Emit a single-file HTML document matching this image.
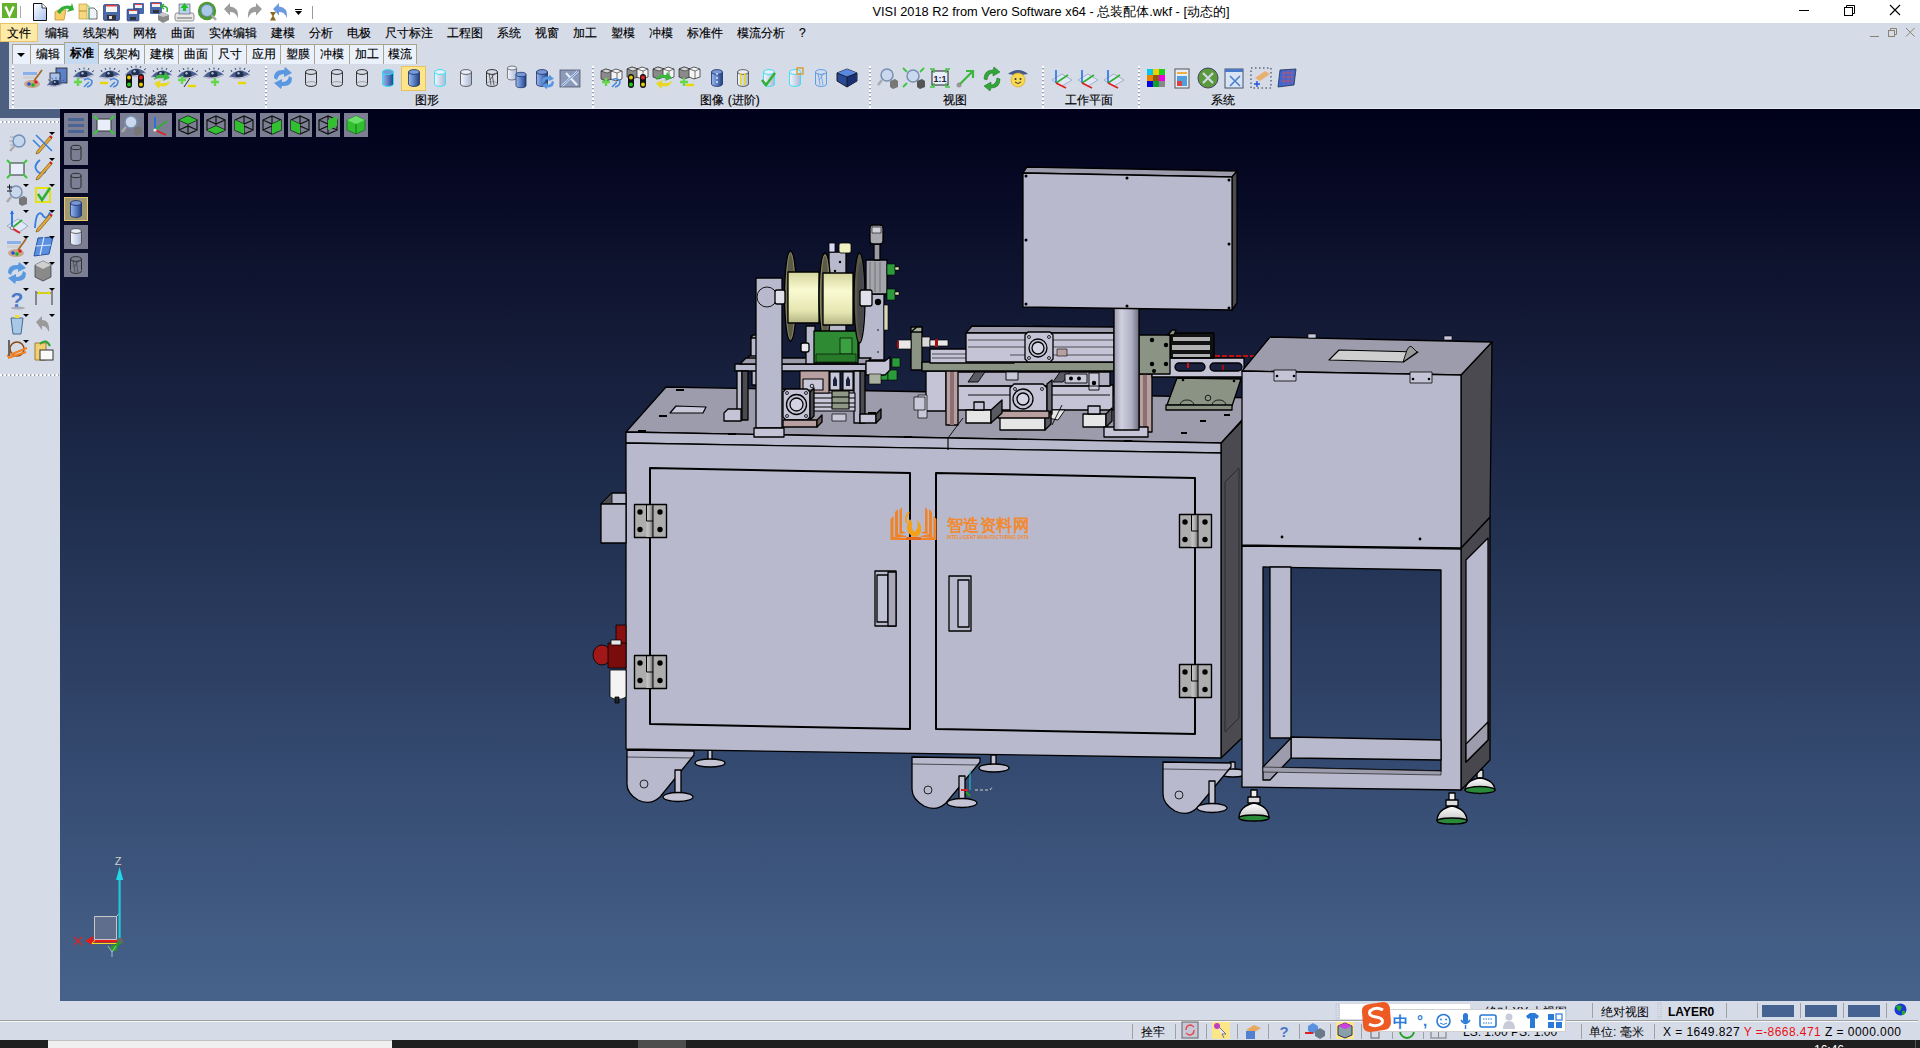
<!DOCTYPE html>
<html><head><meta charset="utf-8">
<style>
*{margin:0;padding:0;box-sizing:border-box}
html,body{width:1920px;height:1048px;overflow:hidden;background:#d6dbe8;font-family:"Liberation Sans",sans-serif;font-size:12px;color:#000}
.a{position:absolute}
.mi{position:absolute;top:25px;height:16px;line-height:16px;font-size:12px;white-space:nowrap;color:#000;-webkit-text-stroke:0.15px #000}
.tab{position:absolute;top:44px;height:20px;border:1px solid #aaa48c;border-bottom:none;background:#eaf1fb;text-align:center;line-height:19px;font-size:12px;color:#000;-webkit-text-stroke:0.15px #000}
.gl{position:absolute;top:92px;height:16px;line-height:16px;font-size:12px;white-space:nowrap;color:#000;transform:translateX(-50%);-webkit-text-stroke:0.15px #000}
.sep{position:absolute;top:66px;width:2px;height:42px;background:repeating-linear-gradient(#ffffff 0 2px,#9aa0ae 2px 3px,#d6dbe8 3px 4px)}
.fb{position:absolute;width:24px;height:24px;background:#7c7f93}
svg{position:absolute;left:0;top:0;overflow:visible}
</style></head><body>
<!-- title bar -->
<div class="a" style="left:0;top:0;width:1920px;height:23px;background:#fff"></div>
<svg width="1920" height="23" style="top:0">
 <rect x="2" y="3" width="15" height="15" fill="#64b22c"/>
 <path d="M5.5 6.5 L9.5 15.5 L13.5 6.5" stroke="#fff" stroke-width="2.4" fill="none"/>
 <rect x="20" y="6" width="1" height="12" fill="#aaa"/>
 <defs><linearGradient id="docg" x1="0" y1="0" x2="1" y2="1"><stop offset="0" stop-color="#fff"/><stop offset="1" stop-color="#a8c0f0"/></linearGradient></defs>
 <path d="M33.5 3.5 H42 L46.5 8 V20.5 H33.5 Z" fill="url(#docg)" stroke="#111" stroke-width="1"/><path d="M42 3.5 V8 H46.5" fill="#fff" stroke="#111" stroke-width="0.8"/>
 <path d="M55 12 L58 10 H66 L64 20 H55 Z" fill="#f6cf6a" stroke="#c09030" stroke-width="0.8"/><path d="M57 12 Q62 4 71 6 L72 3 L74 10 L67 12 L69 9 Q63 8 60 14Z" fill="#2fae38"/>
 <path d="M79 4 H87 V11 H79Z M79 11 H87 V19 H79Z" fill="#f6d880" stroke="#c09a40" stroke-width="0.7"/><path d="M89 8 H94 L97 11 V19 H89Z" fill="#eef3fb" stroke="#333" stroke-width="0.7"/><path d="M87 6 H89 V19 H87" stroke="#4cc04c" stroke-width="0.8" fill="none"/>
 <rect x="103.5" y="4.5" width="16" height="16" rx="1.5" fill="#4a68ac" stroke="#2a3a70" stroke-width="0.7"/><rect x="106" y="5" width="11" height="7" fill="#f4f4f4"/><rect x="106" y="5" width="11" height="1.5" fill="#e04040"/><rect x="107" y="15" width="9" height="5" fill="#333"/><rect x="109" y="16" width="3" height="3" fill="#ddd"/>
 <rect x="133" y="3" width="11" height="11" rx="1" fill="#4a68ac"/><rect x="135" y="4" width="7" height="4" fill="#f0f0f0"/><rect x="135" y="4" width="7" height="1" fill="#e04040"/>
 <rect x="127" y="9" width="12" height="12" rx="1" fill="#4a68ac" stroke="#2a3a70" stroke-width="0.6"/><rect x="129" y="10" width="8" height="4" fill="#f0f0f0"/><rect x="129" y="10" width="8" height="1" fill="#e04040"/><rect x="130" y="17" width="6" height="3" fill="#333"/>
 <rect x="150" y="2" width="12" height="12" rx="1" fill="#4a68ac"/><rect x="152" y="3" width="8" height="4" fill="#f0f0f0"/><rect x="152" y="3" width="8" height="1" fill="#e04040"/><rect x="153" y="10" width="6" height="3" fill="#333"/>
 <path d="M158 15 L163 12 L169 15 V20 L163 23 L158 20Z" fill="#8a8a8a"/><path d="M158 15 L163 17 L169 15 L163 12Z" fill="#c8c8c8"/><path d="M162 6 Q169 6 167 12 M164 4 L161 6.5 L164 9" stroke="#2fae38" stroke-width="1.6" fill="none"/>
 <rect x="175" y="13" width="19" height="8" rx="2" fill="#e8e8e8" stroke="#777" stroke-width="0.8"/><rect x="177" y="17" width="15" height="2" fill="#aaa"/><rect x="179" y="4" width="11" height="10" fill="#b8d0f0" stroke="#555" stroke-width="0.6"/><path d="M184.5 3 L180.5 8 H183 V11 H186 V8 H188.5Z" fill="#20c020"/>
 <circle cx="207" cy="11" r="9.2" fill="#4e9a30"/><circle cx="207" cy="10.5" r="6" fill="#aac8e8" stroke="#6a88b0" stroke-width="1"/><path d="M211.5 15 L216 20" stroke="#aaa" stroke-width="2.5"/>
 <path d="M224 9 L230 3 V6.5 Q239 7 238 18 Q235 11 230 12 V15.5 Z" fill="#9c9c9c"/>
 <path d="M262 9 L256 3 V6.5 Q247 7 248 18 Q251 11 256 12 V15.5 Z" fill="#9c9c9c"/>
 <path d="M273 9 L279 3 V6.5 Q288 7 287 18 Q284 11 279 12 V15.5 Z" fill="#6a9ae0"/><path d="M270 12 H276 L273.5 16 L276 20.5 H270 L272.5 16Z" fill="#8a6a20"/>
 <rect x="295" y="9" width="7" height="1" fill="#000"/><path d="M295 11 H302 L298.5 15Z" fill="#000"/>
 <rect x="312" y="6" width="1" height="13" fill="#999"/>
 <text x="1051" y="16" font-size="12.8" text-anchor="middle" fill="#000" font-family="Liberation Sans">VISI 2018 R2 from Vero Software x64 - 总装配体.wkf - [动态的]</text>
 <rect x="1799" y="10" width="10" height="1" fill="#000"/>
 <rect x="1844.5" y="7.5" width="8" height="8" fill="none" stroke="#000" stroke-width="1"/><path d="M1846.5 7.5 V5.5 H1854.5 V13.5 H1852.5" fill="none" stroke="#000" stroke-width="1"/>
 <path d="M1890 5 L1900 15 M1900 5 L1890 15" stroke="#000" stroke-width="1.1"/>
</svg>
<!-- menu bar -->
<div class="a" style="left:0;top:23px;width:38px;height:19px;background:#fde9a8;border:1px solid #e6c56a"></div>
<div class="mi" style="left:7px">文件</div>
<div class="mi" style="left:45px">编辑</div>
<div class="mi" style="left:83px">线架构</div>
<div class="mi" style="left:133px">网格</div>
<div class="mi" style="left:171px">曲面</div>
<div class="mi" style="left:209px">实体编辑</div>
<div class="mi" style="left:271px">建模</div>
<div class="mi" style="left:309px">分析</div>
<div class="mi" style="left:347px">电极</div>
<div class="mi" style="left:385px">尺寸标注</div>
<div class="mi" style="left:447px">工程图</div>
<div class="mi" style="left:497px">系统</div>
<div class="mi" style="left:535px">视窗</div>
<div class="mi" style="left:573px">加工</div>
<div class="mi" style="left:611px">塑模</div>
<div class="mi" style="left:649px">冲模</div>
<div class="mi" style="left:687px">标准件</div>
<div class="mi" style="left:737px">模流分析</div>
<div class="mi" style="left:799px">?</div>
<svg width="1920" height="50" style="top:0">
 <rect x="1870" y="36" width="9" height="1" fill="#8a8370"/>
 <rect x="1888.5" y="30.5" width="6" height="6" fill="none" stroke="#8a8370"/><path d="M1890.5 30.5 V28.5 H1896.5 V34.5 H1894.5" fill="none" stroke="#8a8370"/>
 <path d="M1906 28 L1914.5 36.5 M1914.5 28 L1906 36.5" stroke="#8a8370" stroke-width="1"/>
</svg>
<!-- left dark strip -->
<div class="a" style="left:0;top:42px;width:9px;height:76px;background:#4d5f80"></div>
<div class="a" style="left:9px;top:108px;width:51px;height:10px;background:#4d5f80"></div>
<!-- tabs -->
<div class="tab" style="left:12px;width:19px"><svg width="19" height="20" style="left:0;top:0"><path d="M4 8 H12 L8 12Z" fill="#000"/></svg></div>
<div class="tab" style="left:30px;width:35px">编辑</div>
<div class="tab" style="left:64px;width:35px;top:42px;height:22px;background:#c5d9f1;font-weight:bold;line-height:20px;-webkit-text-stroke:0">标准</div>
<div class="tab" style="left:98px;width:47px">线架构</div>
<div class="tab" style="left:144px;width:35px">建模</div>
<div class="tab" style="left:178px;width:35px">曲面</div>
<div class="tab" style="left:212px;width:35px">尺寸</div>
<div class="tab" style="left:246px;width:35px">应用</div>
<div class="tab" style="left:280px;width:35px">塑膜</div>
<div class="tab" style="left:314px;width:36px">冲模</div>
<div class="tab" style="left:349px;width:35px">加工</div>
<div class="tab" style="left:383px;width:34px">模流</div>
<!-- ribbon labels -->
<div class="sep" style="left:12px"></div>
<div class="sep" style="left:265px"></div>
<div class="sep" style="left:592px"></div>
<div class="sep" style="left:869px"></div>
<div class="sep" style="left:1042px"></div>
<div class="sep" style="left:1138px"></div>
<div class="gl" style="left:136px">属性/过滤器</div>
<div class="gl" style="left:427px">图形</div>
<div class="gl" style="left:730px">图像 (进阶)</div>
<div class="gl" style="left:955px">视图</div>
<div class="gl" style="left:1089px">工作平面</div>
<div class="gl" style="left:1223px">系统</div>
<div class="a" style="left:60px;top:109px;width:1860px;height:892px;background:linear-gradient(#00001a 0px,#131a36 216px,#223253 436px,#354a70 656px,#46628a 881px)"></div>
<div class="a" style="left:0;top:118px;width:60px;height:883px;background:#d6dbe8"></div>
<div class="a" style="left:9px;top:108px;width:1911px;height:1px;background:#e6eaf4"></div>
<svg width="1920" height="1048" style="top:0;left:0">
<defs>
 <linearGradient id="gb" x1="0" x2="1"><stop offset="0" stop-color="#9ab8ec"/><stop offset="0.5" stop-color="#5b7fc4"/><stop offset="1" stop-color="#22407e"/></linearGradient>
 <linearGradient id="gl" x1="0" x2="1"><stop offset="0" stop-color="#f4f7ff"/><stop offset="1" stop-color="#aab8d6"/></linearGradient>
 <symbol id="eye" viewBox="0 0 24 24"><path d="M1 11 Q11 -1 22 9 Q12 15 1 11Z" fill="#4a5f90"/><path d="M4 6 L3 4 M8 4 L7 2 M12 3.5 V1.5 M16 4 L17 2 M20 6 L22 4.5" stroke="#3a4a70" stroke-width="1"/><ellipse cx="11.5" cy="8.5" rx="4" ry="3.6" fill="#22304e"/><circle cx="10.5" cy="7.3" r="1.2" fill="#a8bce0"/><path d="M2 11 Q11 14 21 9" stroke="#d0cce0" stroke-width="1.2" fill="none"/></symbol>
 <symbol id="plus" viewBox="0 0 24 24"><path d="M2 16 H10 M6 12 V20" stroke="#62d84a" stroke-width="2.4"/></symbol>
 <symbol id="minus" viewBox="0 0 24 24"><path d="M2 17 H10" stroke="#e6d800" stroke-width="2.4"/></symbol>
 <symbol id="blueundo" viewBox="0 0 24 24"><path d="M12 14 Q17 11 20 15 Q20 20 15 21 M12 21 L17 16" stroke="#4a8ad8" stroke-width="1.6" fill="none"/></symbol>
 <symbol id="traffic" viewBox="0 0 24 24"><rect x="2" y="8" width="6" height="14" rx="3" fill="#111"/><rect x="14" y="8" width="6" height="14" rx="3" fill="#111"/><circle cx="5" cy="11.5" r="2" fill="#e8c800"/><circle cx="5" cy="18.5" r="2" fill="#1ec81e"/><circle cx="17" cy="11.5" r="2" fill="#e82020"/><circle cx="17" cy="18.5" r="2" fill="#e8c800"/></symbol>
 <symbol id="recyc" viewBox="0 0 24 24"><path d="M4 14 Q6 7 14 9 L15 6 L20 12 L13 15 L14 12 Q8 11 4 14Z" fill="#3cb83c"/><path d="M20 15 Q18 22 10 20 L9 23 L4 17 L11 14 L10 17 Q16 18 20 15Z" fill="#e8d820"/></symbol>
 <symbol id="cylo" viewBox="0 0 24 24"><ellipse cx="12" cy="6" rx="5.5" ry="2.4" fill="none" stroke="#333" stroke-width="1"/><path d="M6.5 6 V18 A5.5 2.4 0 0 0 17.5 18 V6" fill="none" stroke="#333" stroke-width="1"/><path d="M6.5 18 A5.5 2.4 0 0 1 17.5 18" fill="none" stroke="#888" stroke-width="0.7"/></symbol>
 <symbol id="cylb" viewBox="0 0 24 24"><path d="M6.5 6 V18 A5.5 2.4 0 0 0 17.5 18 V6Z" fill="url(#gb)" stroke="#1a2f66" stroke-width="0.8"/><ellipse cx="12" cy="6" rx="5.5" ry="2.4" fill="#7898d6" stroke="#1a2f66" stroke-width="0.8"/></symbol>
 <symbol id="cylc" viewBox="0 0 24 24"><path d="M6.5 6 V18 A5.5 2.4 0 0 0 17.5 18 V6Z" fill="url(#gb)" stroke="#30e0f0" stroke-width="1"/><ellipse cx="12" cy="6" rx="5.5" ry="2.4" fill="#7898d6" stroke="#30e0f0" stroke-width="1"/></symbol>
 <symbol id="cyll" viewBox="0 0 24 24"><path d="M6.5 6 V18 A5.5 2.4 0 0 0 17.5 18 V6Z" fill="url(#gl)" stroke="#444" stroke-width="0.8"/><ellipse cx="12" cy="6" rx="5.5" ry="2.4" fill="#e8eefa" stroke="#444" stroke-width="0.8"/></symbol>
 <symbol id="cyllc" viewBox="0 0 24 24"><path d="M6.5 6 V18 A5.5 2.4 0 0 0 17.5 18 V6Z" fill="url(#gl)" stroke="#40e0f0" stroke-width="1"/><ellipse cx="12" cy="6" rx="5.5" ry="2.4" fill="#e8eefa" stroke="#40e0f0" stroke-width="1"/></symbol>
 <symbol id="cylw" viewBox="0 0 24 24"><use href="#cylo"/><path d="M9 7 L11 19 M12 8 L14 19 M15 7 L10 14" stroke="#444" stroke-width="0.8"/></symbol>
 <symbol id="cubes" viewBox="0 0 24 24"><path d="M1 5 L6 3 L12 5 V13 L6 15 L1 13Z" fill="#8a8a8a" stroke="#222" stroke-width="0.7"/><path d="M1 5 L6 3 L12 5 L7 7Z" fill="#d8d8d8" stroke="#222" stroke-width="0.6"/><path d="M11 5 L16 3 L22 5 V13 L16 15 L11 13Z" fill="#f4f4f4" stroke="#222" stroke-width="0.7"/><path d="M11 5 L17 7 L22 5 M17 7 V15" fill="none" stroke="#222" stroke-width="0.6"/></symbol>
 <symbol id="cubeb" viewBox="0 0 24 24"><path d="M2 7 L12 3 L22 7 V15 L12 21 L2 15Z" fill="#2a4a9a" stroke="#111" stroke-width="0.9"/><path d="M2 7 L12 3 L22 7 L12 11Z" fill="#5a88e0"/><path d="M12 11 L22 7 V15 L12 21Z" fill="#1a3070"/><path d="M2 7 L12 11 L22 7 M12 11 V21" stroke="#111" stroke-width="0.8" fill="none"/></symbol>
 <symbol id="zoomcube" viewBox="0 0 24 24"><circle cx="11" cy="9" r="6" fill="#c9d8ec" stroke="#7890b0" stroke-width="1.5"/><path d="M6 14 L2 19" stroke="#aaa" stroke-width="2.5"/><path d="M14 15 L19 13 L22 15 V21 L17 23 L14 21Z" fill="#777"/></symbol>
 <symbol id="fitbox" viewBox="0 0 24 24"><rect x="5" y="6" width="14" height="12" fill="#e8eefa" stroke="#333"/><path d="M2 3 L6 7 M22 3 L18 7 M2 21 L6 17 M22 21 L18 17" stroke="#3cc83c" stroke-width="2"/></symbol>
 <symbol id="arrowg" viewBox="0 0 24 24"><circle cx="5" cy="19" r="2.5" fill="#999"/><path d="M6 18 L18 6 M12 5 H19 V12" stroke="#3cb83c" stroke-width="2.2" fill="none"/></symbol>
 <symbol id="smiley" viewBox="0 0 24 24"><path d="M2 8 Q12 0 22 8 Q12 10 2 8Z" fill="#44598a"/><circle cx="12" cy="14" r="7" fill="#f8d850" stroke="#d8a820" stroke-width="0.7"/><circle cx="9.5" cy="13" r="1" fill="#333"/><circle cx="14.5" cy="13" r="1" fill="#333"/><path d="M9 16 Q12 19 15 16" stroke="#333" fill="none"/></symbol>
 <symbol id="wplane" viewBox="0 0 24 24"><path d="M2 14 L12 8 L22 14 L12 20Z" fill="#e0e8f8" stroke="#8a9ab8" stroke-width="0.7"/><path d="M6 17 V4" stroke="#2070e8" stroke-width="1.6"/><path d="M6 17 L18 9" stroke="#30b030" stroke-width="1.6"/><path d="M6 17 L16 22" stroke="#e02020" stroke-width="1.6"/></symbol>
 <symbol id="palette" viewBox="0 0 24 24"><rect x="2" y="6" width="14" height="3" fill="#8ab0ec"/><rect x="2" y="10" width="13" height="3" fill="#d0d0d0"/><ellipse cx="11" cy="18" rx="8" ry="4" fill="#c9a488"/><circle cx="8" cy="18" r="1.8" fill="#2050d8"/><circle cx="12" cy="19" r="1.8" fill="#20b020"/><circle cx="15" cy="16" r="1.8" fill="#d82020"/><path d="M13 15 L21 4" stroke="#a86828" stroke-width="1.8"/></symbol>
 <symbol id="docseye" viewBox="0 0 24 24"><rect x="10" y="2" width="11" height="15" fill="#5a80c8" stroke="#222" stroke-width="0.8"/><rect x="4" y="7" width="10" height="10" fill="#a8c0ec" stroke="#222" stroke-width="0.8"/><use href="#eye" x="0" y="10" width="20" height="20"/></symbol>
 <symbol id="grid9" viewBox="0 0 24 24"><rect x="3" y="3" width="6" height="6" fill="#00c8f0"/><rect x="9" y="3" width="6" height="6" fill="#f0d000"/><rect x="15" y="3" width="6" height="6" fill="#20d020"/><rect x="3" y="9" width="6" height="6" fill="#f08000"/><rect x="9" y="9" width="6" height="6" fill="#8a5a10"/><rect x="15" y="9" width="6" height="6" fill="#f000e0"/><rect x="3" y="15" width="6" height="6" fill="#0000e0"/><rect x="9" y="15" width="6" height="6" fill="#10a030"/><rect x="15" y="15" width="6" height="6" fill="#888"/></symbol>
 <symbol id="calc" viewBox="0 0 24 24"><rect x="5" y="3" width="14" height="19" fill="#e8eef8" stroke="#555"/><rect x="7" y="6" width="10" height="2" fill="#f0b040"/><rect x="7" y="10" width="10" height="10" fill="#50a0e0"/><rect x="7" y="15" width="5" height="5" fill="#e04040"/></symbol>
 <symbol id="tools" viewBox="0 0 24 24"><circle cx="12" cy="12" r="10" fill="#5a9a3a" stroke="#446"/><path d="M7 7 L17 17 M17 7 L7 17" stroke="#d0d8e8" stroke-width="2.2"/></symbol>
 <symbol id="win" viewBox="0 0 24 24"><rect x="3" y="3" width="18" height="19" fill="#d8e4f4" stroke="#456"/><rect x="3" y="3" width="18" height="3" fill="#4a78c8"/><path d="M8 10 L18 20 M18 10 L8 20" stroke="#4a80d0" stroke-width="1.6"/></symbol>
 <symbol id="hand" viewBox="0 0 24 24"><path d="M2 2 H22 V22 H2Z" fill="none" stroke="#234" stroke-dasharray="1.5 2.5"/><path d="M6 12 L16 5 L21 8 L11 15Z" fill="#e8b070"/><path d="M5 18 H11 M8 15 V21" stroke="#2050d8" stroke-width="1.4"/></symbol>
 <symbol id="panel" viewBox="0 0 24 24"><path d="M5 4 L21 3 L19 19 L3 21Z" fill="#3a68d8" stroke="#234" stroke-width="0.8"/><path d="M7 7 H18 M6.5 11 H18 M6 15 H17 M9 5 V19 M13 4 V19 M17 4 V18" stroke="#e05050" stroke-width="0.7"/></symbol>
 <symbol id="zoomgreen" viewBox="0 0 24 24"><circle cx="11" cy="10" r="6" fill="#c9d8ec" stroke="#7890b0" stroke-width="1.5"/><path d="M1 2 L5 6 M22 2 L18 6 M1 21 L5 17" stroke="#3cc83c" stroke-width="1.8"/><path d="M15 15 L20 13 L23 15 V21 L18 23 L15 21Z" fill="#555"/></symbol>
 <symbol id="one1" viewBox="0 0 24 24"><rect x="4" y="5" width="16" height="14" fill="#e8eefa" stroke="#222"/><text x="12" y="16" font-size="9" text-anchor="middle" font-family="Liberation Sans" fill="#223" font-weight="bold">1:1</text><path d="M2 3 h4 v4 M22 3 h-4 v4 M2 21 h4 v-4 M22 21 h-4 v-4" stroke="#3cc83c" stroke-width="1.5" fill="none"/></symbol>
 <symbol id="refblue" viewBox="0 0 24 24"><path d="M3 12 Q3 3 13 4 L14 1 L21 7 L13 11 L13 8 Q7 8 6 14Z" fill="#5a98e0"/><path d="M21 12 Q21 21 11 20 L10 23 L3 17 L11 13 L11 16 Q17 16 18 10Z" fill="#5a98e0"/></symbol>
</defs>
<!-- highlight -->
<rect x="401.5" y="66.5" width="24" height="24" fill="#fde58a" stroke="#e8c262"/>
<!-- group1 -->
<use href="#palette" x="21" y="66" width="24" height="24"/>
<use href="#docseye" x="46" y="66" width="24" height="24"/>
<use href="#eye" x="72" y="66" width="24" height="24"/><use href="#plus" x="72" y="66" width="24" height="24"/><use href="#blueundo" x="72" y="66" width="24" height="24"/>
<use href="#eye" x="98" y="66" width="24" height="24"/><use href="#minus" x="98" y="66" width="24" height="24"/><use href="#blueundo" x="98" y="66" width="24" height="24"/>
<use href="#eye" x="124" y="64" width="24" height="24"/><use href="#traffic" x="124" y="66" width="24" height="24"/>
<use href="#eye" x="150" y="66" width="24" height="24"/><use href="#recyc" x="150" y="66" width="24" height="24"/>
<use href="#eye" x="176" y="66" width="24" height="24"/><use href="#plus" x="176" y="64" width="24" height="24"/><path d="M184 87 L190 78" stroke="#222" stroke-width="1"/><use href="#minus" x="186" y="69" width="24" height="24"/>
<use href="#eye" x="202" y="66" width="24" height="24"/><use href="#plus" x="209" y="66" width="24" height="24"/>
<use href="#eye" x="228" y="66" width="24" height="24"/><use href="#minus" x="236" y="66" width="24" height="24"/>
<!-- group2 -->
<use href="#refblue" x="271" y="66" width="24" height="24"/>
<use href="#cylo" x="299" y="66" width="24" height="24"/>
<use href="#cylo" x="325" y="66" width="24" height="24"/>
<use href="#cylo" x="350" y="66" width="24" height="24"/>
<use href="#cylc" x="376" y="66" width="24" height="24"/>
<use href="#cylb" x="402" y="66" width="24" height="24"/>
<use href="#cyllc" x="428" y="66" width="24" height="24"/>
<use href="#cyll" x="454" y="66" width="24" height="24"/>
<use href="#cylw" x="480" y="66" width="24" height="24"/>
<use href="#cyll" x="502" y="63" width="20" height="20"/><use href="#cylb" x="510" y="69" width="22" height="22"/>
<use href="#cylb" x="530" y="66" width="24" height="24"/><use href="#refblue" x="540" y="74" width="16" height="16"/>
<rect x="560" y="70" width="20" height="17" fill="#8a9ab8" stroke="#556" stroke-width="0.8"/><path d="M562 86 L578 71 M566 73 L577 85" stroke="#e8eef8" stroke-width="2.2"/><path d="M562 86 L578 71" stroke="#4a80d0" stroke-width="1"/>
<!-- group3 -->
<use href="#cubes" x="600" y="66" width="24" height="24"/><use href="#plus" x="600" y="66" width="24" height="24"/><use href="#blueundo" x="600" y="66" width="24" height="24"/>
<use href="#cubes" x="626" y="64" width="24" height="24"/><use href="#traffic" x="626" y="66" width="24" height="24"/>
<use href="#cubes" x="652" y="64" width="24" height="24"/><use href="#recyc" x="652" y="66" width="24" height="24"/>
<use href="#cubes" x="678" y="64" width="24" height="24"/><use href="#plus" x="678" y="66" width="24" height="24"/><use href="#minus" x="684" y="68" width="24" height="24"/>
<use href="#cylb" x="705" y="66" width="24" height="24"/><path d="M717 73 V85" stroke="#fff" stroke-width="1.2" stroke-dasharray="2 2"/>
<use href="#cyll" x="731" y="66" width="24" height="24"/><rect x="740" y="73" width="1.6" height="12" fill="#e8d820"/><rect x="744" y="73" width="1.6" height="12" fill="#e8d820"/>
<use href="#cyllc" x="757" y="66" width="24" height="24"/><path d="M762 80 L766 85 L775 73" stroke="#30b030" stroke-width="2.5" fill="none"/>
<use href="#cyllc" x="783" y="66" width="24" height="24"/><rect x="797" y="68" width="6" height="6" fill="none" stroke="#d8a040" stroke-width="1.5"/>
<ellipse cx="821" cy="72" rx="5.5" ry="2.4" fill="none" stroke="#5aa0e8" stroke-width="1"/><path d="M815.5 72 V84 A5.5 2.4 0 0 0 826.5 84 V72" fill="none" stroke="#5aa0e8" stroke-width="1"/><path d="M818 73 L820 85 M821 74 L823 85 M824 73 L819 80" stroke="#5aa0e8" stroke-width="0.8"/>
<use href="#cubeb" x="835" y="66" width="24" height="24"/>
<!-- group4 -->
<use href="#zoomcube" x="876" y="66" width="24" height="24"/>
<use href="#zoomgreen" x="902" y="66" width="24" height="24"/>
<use href="#one1" x="928" y="66" width="24" height="24"/>
<use href="#arrowg" x="954" y="66" width="24" height="24"/>
<path d="M984 79 Q984 70 993 70 L994 67 L1000 72 L993 76 L993 73 Q988 73 987 80Z M1000 79 Q1000 88 991 88 L990 91 L984 86 L991 82 L991 85 Q996 85 997 78Z" fill="#30a838" stroke="#1a6a20" stroke-width="0.5"/>
<use href="#smiley" x="1006" y="66" width="24" height="24"/>
<!-- group5 -->
<use href="#wplane" x="1050" y="66" width="24" height="24"/>
<use href="#wplane" x="1076" y="66" width="24" height="24"/>
<use href="#wplane" x="1102" y="66" width="24" height="24"/>
<!-- group6 -->
<use href="#grid9" x="1144" y="66" width="24" height="24"/>
<use href="#calc" x="1170" y="66" width="24" height="24"/>
<use href="#tools" x="1196" y="66" width="24" height="24"/>
<use href="#win" x="1222" y="66" width="24" height="24"/>
<use href="#hand" x="1249" y="66" width="24" height="24"/>
<use href="#panel" x="1275" y="66" width="24" height="24"/>
</svg>
<div class="a" style="left:0;top:121px;width:59px;height:2px;background:repeating-linear-gradient(90deg,#fff 0 2px,#9aa0ae 2px 3px,#d6dbe8 3px 4px)"></div>
<div class="a" style="left:0;top:374px;width:59px;height:2px;background:repeating-linear-gradient(90deg,#fff 0 2px,#9aa0ae 2px 3px,#d6dbe8 3px 4px)"></div>
<svg width="1920" height="1048" style="top:0;left:0">
<defs>
 <symbol id="pencil" viewBox="0 0 24 24"><path d="M6 20 L19 5 L21 7 L8 22 L5 23Z" fill="#e0a838" stroke="#6a4a10" stroke-width="0.6"/><path d="M19 5 L21 7" stroke="#d02020" stroke-width="2"/></symbol>
 <symbol id="dd" viewBox="0 0 24 24"><path d="M18 1 H24 L21 4Z" fill="#000"/></symbol>
 <symbol id="fbcyl" viewBox="0 0 24 24"><ellipse cx="12" cy="6.5" rx="5" ry="2.2" fill="none" stroke="#222" stroke-width="0.9"/><path d="M7 6.5 V17.5 A5 2.2 0 0 0 17 17.5 V6.5" fill="none" stroke="#222" stroke-width="0.9"/></symbol>
 <symbol id="wcube" viewBox="0 0 24 24"><path d="M3 7 L12 3 L21 7 V17 L12 21 L3 17Z M3 7 L12 11 L21 7 M12 11 V21 M3 17 L12 13 L21 17 M12 3 V13" fill="none" stroke="#111" stroke-width="1.2"/></symbol>
</defs>
<!-- left toolbar icons -->
<path d="M10 137 H16 M9 141 H14 M10 145 H15" stroke="#b8b8c0" stroke-width="1.5"/><circle cx="19" cy="141" r="6" fill="#c4d6ec" stroke="#7090b8" stroke-width="1.5"/><path d="M14.5 146 L10 151" stroke="#aaa" stroke-width="2.5"/>
<use href="#pencil" x="31" y="131" width="24" height="24"/><path d="M36 135 L52 151 M33 140 L40 147" stroke="#3a80e0" stroke-width="1.6"/><use href="#dd" x="31" y="131" width="24" height="24"/>
<use href="#fitbox" x="5" y="157" width="24" height="24"/>
<path d="M40 160 Q32 166 38 172 Q44 176 46 170" stroke="#3a80e0" stroke-width="1.8" fill="none"/><use href="#pencil" x="31" y="157" width="24" height="24"/><use href="#dd" x="31" y="157" width="24" height="24"/>
<use href="#zoomcube" x="5" y="183" width="24" height="24"/><path d="M7 187 H12 M9.5 184.5 V189.5 M7 191 H12" stroke="#111" stroke-width="1"/><use href="#dd" x="5" y="183" width="24" height="24"/>
<rect x="36" y="188" width="14" height="14" fill="none" stroke="#e8e000" stroke-width="1.8"/><path d="M38 194 L42 200 L50 188" stroke="#30b030" stroke-width="2.6" fill="none"/><use href="#dd" x="31" y="183" width="24" height="24"/>
<path d="M7 226 L18 219 L28 226 L18 233Z" fill="#e0e8f8" stroke="#8a9ab8" stroke-width="0.8"/><path d="M12 228 V213" stroke="#2070e8" stroke-width="1.8"/><path d="M10 214 L12 210 L14 214Z" fill="#2070e8"/><path d="M12 228 L22 220" stroke="#30b030" stroke-width="1.8"/><path d="M12 228 L20 233" stroke="#e02020" stroke-width="1.8"/><circle cx="12" cy="228" r="1.8" fill="#ddd" stroke="#666" stroke-width="0.6"/><use href="#dd" x="5" y="209" width="24" height="24"/>
<path d="M35 228 Q36 210 42 214 Q46 222 50 212" stroke="#3a80e0" stroke-width="1.8" fill="none"/><use href="#pencil" x="31" y="209" width="24" height="24"/><use href="#dd" x="31" y="209" width="24" height="24"/>
<use href="#palette" x="5" y="235" width="24" height="24"/><use href="#dd" x="5" y="235" width="24" height="24"/>
<path d="M38 238 L53 237 L49 254 L34 256Z" fill="#5a90e0" stroke="#2a50a0"/><path d="M44 237 L40 255 M36 246 L51 245" stroke="#dbe6fa" stroke-width="1.2"/><use href="#dd" x="31" y="235" width="24" height="24"/>
<use href="#refblue" x="5" y="261" width="24" height="24"/><use href="#dd" x="5" y="261" width="24" height="24"/>
<path d="M35 265 L43 261 L51 265 V277 L43 281 L35 277Z" fill="#8a8a8a" stroke="#333" stroke-width="0.7"/><path d="M35 265 L43 269 L51 265 L43 261Z" fill="#cfcfcf"/><use href="#dd" x="31" y="261" width="24" height="24"/>
<text x="17" y="307" font-size="21" font-weight="bold" fill="#4a78c8" text-anchor="middle" font-family="Liberation Sans">?</text><ellipse cx="18" cy="308" rx="7" ry="1.5" fill="#8a8a9a" opacity="0.6"/><use href="#dd" x="5" y="287" width="24" height="24"/>
<path d="M36 291 V305 M52 291 V305 M37 293 H51" stroke="#333" stroke-width="1"/><path d="M38 293 H50" stroke="#e8e000" stroke-width="1.6"/><path d="M37 293 L40 291 V295Z M51 293 L48 291 V295Z" fill="#e8e000"/><use href="#dd" x="31" y="287" width="24" height="24"/>
<path d="M11 318 H23 L21 334 H13Z" fill="#a8c8e8" stroke="#4a6a8a"/><rect x="15" y="315" width="4" height="3" fill="#f0e020"/><use href="#dd" x="5" y="313" width="24" height="24"/>
<path d="M36 322 L42 316 V320 Q50 320 49 332 Q46 325 42 326 V330Z" fill="#9a9a9a"/><use href="#dd" x="31" y="313" width="24" height="24"/>
<circle cx="17" cy="349" r="7" fill="none" stroke="#8a4a10" stroke-width="1.6"/><path d="M7 356 L27 348 M8 358 L26 352" stroke="#f08020" stroke-width="2"/><rect x="8" y="340" width="2" height="16" fill="#666"/><use href="#dd" x="5" y="339" width="24" height="24"/>
<path d="M35 343 H46 V360 H35Z" fill="#f0d070" stroke="#a08030"/><rect x="40" y="350" width="13" height="10" fill="#fafafa" stroke="#333"/><path d="M40 344 Q46 338 50 346" stroke="#30a030" stroke-width="2" fill="none"/>
<!-- floating viewport buttons -->
<g fill="#7c7f93">
<rect x="64" y="113" width="24" height="24"/><rect x="92" y="113" width="24" height="24"/><rect x="120" y="113" width="24" height="24"/><rect x="148" y="113" width="24" height="24"/><rect x="176" y="113" width="24" height="24"/><rect x="204" y="113" width="24" height="24"/><rect x="232" y="113" width="24" height="24"/><rect x="260" y="113" width="24" height="24"/><rect x="288" y="113" width="24" height="24"/><rect x="316" y="113" width="24" height="24"/><rect x="344" y="113" width="24" height="24"/>
<rect x="64" y="141" width="24" height="24"/><rect x="64" y="169" width="24" height="24"/><rect x="64" y="253" width="24" height="24"/><rect x="64" y="225" width="24" height="24"/>
</g>
<rect x="64.5" y="197.5" width="23" height="23" fill="#a09a78" stroke="#e8c868"/>
<rect x="68" y="118" width="16" height="3" fill="#4a6494"/><rect x="68" y="124" width="16" height="3" fill="#4a6494"/><rect x="68" y="130" width="16" height="3" fill="#4a6494"/>
<use href="#fitbox" x="92" y="113" width="24" height="24"/>
<use href="#zoomcube" x="120" y="113" width="24" height="24"/>
<path d="M155 130 V117" stroke="#2070e8" stroke-width="1.8"/><path d="M155 130 L167 121" stroke="#30b030" stroke-width="1.6"/><path d="M155 130 L166 135" stroke="#e02020" stroke-width="1.8"/><circle cx="155" cy="130" r="1.6" fill="#eee"/>
<use href="#wcube" x="176" y="113" width="24" height="24"/><path d="M179 120 L188 116 L197 120 L188 124Z" fill="#30c030"/>
<use href="#wcube" x="204" y="113" width="24" height="24"/><path d="M207 130 L216 126 L225 130 L216 134Z" fill="#30c030"/>
<use href="#wcube" x="232" y="113" width="24" height="24"/><path d="M235 120 L244 124 V134 L235 130Z" fill="#30c030"/>
<use href="#wcube" x="260" y="113" width="24" height="24"/><path d="M272 124 L281 120 V130 L272 134Z" fill="#30c030"/>
<use href="#wcube" x="288" y="113" width="24" height="24"/><path d="M291 120 L300 124 V134 L291 130Z" fill="#30c030"/>
<use href="#wcube" x="316" y="113" width="24" height="24"/><path d="M328 120 L337 116 V126 L328 130Z" fill="#30c030"/>
<path d="M347 120 L356 116 L365 120 V130 L356 134 L347 130Z" fill="#30c030" stroke="#187018" stroke-width="0.8"/><path d="M347 120 L356 124 L365 120 L356 116Z" fill="#6ae06a"/><path d="M356 124 V134" stroke="#187018"/>
<use href="#fbcyl" x="64" y="141" width="24" height="24"/>
<use href="#fbcyl" x="64" y="169" width="24" height="24"/>
<use href="#cylb" x="64" y="197" width="24" height="24"/>
<use href="#cyll" x="64" y="225" width="24" height="24"/>
<use href="#cylw" x="64" y="253" width="24" height="24"/>
</svg>
<svg width="1920" height="1048" style="top:0;left:0" stroke-linejoin="round">
<defs>
 <linearGradient id="pole" x1="0" x2="1"><stop offset="0" stop-color="#9a9aac"/><stop offset="0.3" stop-color="#d0d0e0"/><stop offset="0.7" stop-color="#b0b0c4"/><stop offset="1" stop-color="#6e6e80"/></linearGradient>
 <linearGradient id="spool" x1="0" x2="0" y1="0" y2="1"><stop offset="0" stop-color="#d4d49c"/><stop offset="0.35" stop-color="#fafad2"/><stop offset="0.75" stop-color="#e6e6b2"/><stop offset="1" stop-color="#b4b484"/></linearGradient>
 <linearGradient id="pad" x1="0" x2="0" y1="0" y2="1"><stop offset="0" stop-color="#ffffff"/><stop offset="1" stop-color="#c8c8c8"/></linearGradient>
</defs>
<g stroke="#000" stroke-width="1.3">
<!-- ===== main cabinet ===== -->
<!-- feet behind -->
<g fill="#c4c4d4">
 <rect x="708" y="748" width="4" height="14"/><ellipse cx="710" cy="763" rx="15" ry="4"/>
 <rect x="991" y="755" width="5" height="12"/><ellipse cx="994" cy="768" rx="15" ry="4"/>
 <rect x="1230" y="762" width="5" height="11"/><ellipse cx="1233" cy="773" rx="14" ry="4"/>
</g>
<!-- right dark side -->
<polygon points="1221,443 1242,421 1242,738 1221,758" fill="#4a4a50"/>
<!-- top plate -->
<polygon points="1225,482 1239,468 1239,718 1225,732" fill="none" stroke="#2a2a30" stroke-width="1"/>
<polygon points="626,432 666,387 1262,398 1221,443" fill="#9c9cac"/>
<polygon points="626,432 1221,443 1221,453 626,443" fill="#b9b9cd"/>
<!-- front -->
<polygon points="626,443 1221,453 1221,758 626,749" fill="#b9b9cd"/>

<!-- doors -->
<polygon points="650,468 910,473 910,729 650,724" fill="#b9b9cd" stroke-width="2"/>
<polygon points="936,473 1195,478 1195,734 936,729" fill="#b9b9cd" stroke-width="2"/>
<!-- handles -->
<rect x="875" y="571" width="21" height="55" fill="#b8b8cc"/><rect x="877" y="575" width="11" height="47" fill="#c0c0d4"/><rect x="888" y="572" width="8" height="54" fill="#a8a8b8"/>
<rect x="949" y="576" width="22" height="55" fill="#b8b8cc"/><rect x="958" y="580" width="11" height="47" fill="#c0c0d4"/>
<!-- hinges -->
<defs><linearGradient id="knk" x1="0" x2="1"><stop offset="0" stop-color="#c8c8c8"/><stop offset="0.5" stop-color="#b0b0b0"/><stop offset="1" stop-color="#6a6a6a"/></linearGradient></defs>
<g transform="translate(634,504)"><rect x="0.5" y="0.5" width="32" height="33" fill="#adadad" stroke-width="1.4"/><rect x="12.5" y="2" width="6.5" height="31" fill="url(#knk)" stroke="none"/><path d="M12.5 1 V17 H19 M19 1 V33" fill="none" stroke-width="1"/><g fill="#000" stroke="none"><circle cx="6" cy="8" r="2.7"/><circle cx="26" cy="8" r="2.7"/><circle cx="6" cy="25.5" r="2.7"/><circle cx="26" cy="25.5" r="2.7"/></g></g>
<g transform="translate(634,655)"><rect x="0.5" y="0.5" width="32" height="33" fill="#adadad" stroke-width="1.4"/><rect x="12.5" y="2" width="6.5" height="31" fill="url(#knk)" stroke="none"/><path d="M12.5 1 V17 H19 M19 1 V33" fill="none" stroke-width="1"/><g fill="#000" stroke="none"><circle cx="6" cy="8" r="2.7"/><circle cx="26" cy="8" r="2.7"/><circle cx="6" cy="25.5" r="2.7"/><circle cx="26" cy="25.5" r="2.7"/></g></g>
<g transform="translate(1179,514)"><rect x="0.5" y="0.5" width="32" height="33" fill="#adadad" stroke-width="1.4"/><rect x="12.5" y="2" width="6.5" height="31" fill="url(#knk)" stroke="none"/><path d="M12.5 1 V17 H19 M19 1 V33" fill="none" stroke-width="1"/><g fill="#000" stroke="none"><circle cx="6" cy="8" r="2.7"/><circle cx="26" cy="8" r="2.7"/><circle cx="6" cy="25.5" r="2.7"/><circle cx="26" cy="25.5" r="2.7"/></g></g>
<g transform="translate(1179,664)"><rect x="0.5" y="0.5" width="32" height="33" fill="#adadad" stroke-width="1.4"/><rect x="12.5" y="2" width="6.5" height="31" fill="url(#knk)" stroke="none"/><path d="M12.5 1 V17 H19 M19 1 V33" fill="none" stroke-width="1"/><g fill="#000" stroke="none"><circle cx="6" cy="8" r="2.7"/><circle cx="26" cy="8" r="2.7"/><circle cx="6" cy="25.5" r="2.7"/><circle cx="26" cy="25.5" r="2.7"/></g></g>
<!-- side box -->
<polygon points="601,504 612,493 626,493 626,504" fill="#b9b9cd"/><polygon points="601,504 612,493 612,504" fill="#4a4a50" stroke-width="0.8"/>
<rect x="601" y="504" width="25" height="39" fill="#b9b9cd"/>
<!-- air filter -->
<g stroke-width="0.8">
 <rect x="616" y="625" width="10" height="20" fill="#8a1010"/>
 <ellipse cx="602" cy="655" rx="9" ry="10" fill="#a01818"/>
 <rect x="608" y="643" width="18" height="25" fill="#7a0c0c"/>
 <rect x="611" y="640" width="10" height="5" fill="#e8e8e8"/>
 <path d="M610 670 H626 V697 Q618 702 610 697Z" fill="#f4f4f4"/>
 <rect x="615" y="697" width="4" height="6" fill="#222"/>
</g>
<!-- feet brackets -->
<g fill="#b9b9cd">
 <path d="M627,750 L694,751 L694,755 L660,797 Q650,806 638,800 Q626,793 627,782 Z"/>
 <path d="M912,757 L980,758 L980,762 L946,803 Q936,812 924,806 Q912,799 912,789 Z"/>
 <path d="M1163,762 L1231,763 L1231,767 L1197,808 Q1187,817 1175,811 Q1163,804 1163,794 Z"/>
</g>
<g fill="none" stroke-width="0.8"><circle cx="644" cy="784" r="4"/><circle cx="928" cy="790" r="4"/><circle cx="1179" cy="795" r="4"/></g>
<line x1="627" y1="757" x2="692" y2="758" stroke-width="0.6"/><line x1="912" y1="764" x2="978" y2="765" stroke-width="0.6"/><line x1="1163" y1="769" x2="1229" y2="770" stroke-width="0.6"/>
<g fill="#c4c4d4">
 <rect x="675" y="770" width="6" height="25"/><ellipse cx="678" cy="797" rx="15" ry="4.5"/>
 <rect x="959" y="776" width="6" height="25"/><ellipse cx="962" cy="803" rx="15" ry="4.5"/>
 <rect x="1209" y="781" width="6" height="25"/><ellipse cx="1212" cy="808" rx="15" ry="4.5"/>
</g>
<g stroke-width="1">
 <path d="M970 770 V790" stroke="#20c8d8"/>
 <path d="M961 790 H968" stroke="#e02020" stroke-width="2"/>
 <path d="M975 790 H990 L993 786" stroke="#d0d0d0" stroke-dasharray="3 2" fill="none"/>
 <path d="M966 792 L970 796" stroke="#20a020" stroke-width="2"/>
</g>
</g>
</svg>
<svg width="1920" height="1048" style="top:0;left:0" stroke-linejoin="round">
<g stroke="#000" stroke-width="1.3">
<!-- top plate details -->
<g fill="#c4c4d6" stroke-width="1.2">
 <polygon points="670,413 676,406 706,407 703,413" fill="#c8c8da"/>
 <path d="M948 438 L963 418" fill="none" stroke-width="0.9"/><path d="M948 438 V450" fill="none" stroke-width="1.1"/>
</g>
<g fill="#000" stroke="none">
 <rect x="676" y="389" width="8" height="2"/><rect x="659" y="415" width="8" height="2"/><rect x="638" y="430" width="8" height="2"/>
 <rect x="728" y="433" width="8" height="2"/><rect x="904" y="436" width="8" height="2"/><rect x="868" y="412" width="8" height="2"/>
 <rect x="1124" y="440" width="8" height="2"/><rect x="1181" y="432" width="6" height="2"/><rect x="1200" y="420" width="6" height="2"/><rect x="1224" y="414" width="6" height="2"/>
</g>
<!-- ============ LEFT SPOOL ASSEMBLY ============ -->
<!-- back vertical plate (behind spool) -->
<rect x="859" y="294" width="25" height="66" fill="#b9b9cd"/><circle cx="878" cy="330" r="0.8" fill="#000" stroke="none"/><circle cx="878" cy="352" r="0.8" fill="#000" stroke="none"/>
<rect x="829" y="252" width="17" height="80" fill="#b9b9cd"/>
<rect x="829" y="243" width="6" height="9" fill="#d8d8f0" stroke-width="0.8"/>
<rect x="839" y="243" width="12" height="10" rx="2" fill="#f0f0c0" stroke-width="0.8"/>
<circle cx="840" cy="262" r="1.2" fill="#000" stroke="none"/><circle cx="835" cy="271" r="1.2" fill="#000" stroke="none"/>
<!-- left table -->
<rect x="751" y="336" width="6" height="30" fill="#b9b9cd"/><polygon points="751,338 753,335 757,335 757,338" fill="#9c9cac"/>
<rect x="749" y="356" width="8" height="7" fill="#c4c4d6"/>
<rect x="752" y="370" width="5" height="15" fill="#b9b9cd"/>

<rect x="735" y="364" width="131" height="7" fill="#b9b9cd"/>
<polygon points="740,364 746,358 871,358 866,364" fill="#9c9cac"/>
<rect x="737" y="371" width="5" height="49" fill="#b9b9cd"/><rect x="742" y="371" width="6" height="49" fill="#4a4a50"/>
<rect x="854" y="371" width="7" height="52" fill="#b9b9cd"/><rect x="860" y="371" width="5" height="52" fill="#4a4a50"/>
<polygon points="724,413 728,409 741,409 741,421 724,421" fill="#c4c4d6"/>
<polygon points="860,414 876,414 876,423 860,423" fill="#c4c4d6"/><polygon points="876,414 881,409 881,418 876,423" fill="#4a4a50"/>
<!-- under-table parts -->
<g stroke-width="1.1">
<rect x="812" y="393" width="43" height="18" fill="#c8c8d8"/>
<line x1="812" y1="398" x2="855" y2="398"/><line x1="812" y1="403" x2="855" y2="403"/><line x1="812" y1="407" x2="855" y2="407"/>
<rect x="800" y="371" width="29" height="22" fill="#b8a0a0"/>
<rect x="803" y="379" width="20" height="11" fill="#c8c8d8"/><circle cx="812" cy="386" r="1.8" fill="none" stroke-width="0.8"/>
<rect x="830" y="372" width="10" height="18" fill="#c8c8d8"/><path d="M835 376 L833 380 V386 H837 V380Z" fill="#1a2240" stroke="none"/>
<rect x="843" y="372" width="10" height="18" fill="#c8c8d8"/><path d="M848 376 L846 380 V386 H850 V380Z" fill="#1a2240" stroke="none"/>
<rect x="832" y="391" width="17" height="18" fill="#8f9886"/><line x1="832" y1="397" x2="849" y2="397"/><line x1="832" y1="403" x2="849" y2="403"/>
<rect x="832" y="414" width="14" height="7" fill="#c8c8d8" stroke-width="0.7"/>
</g>
<!-- gearbox left -->
<polygon points="786,389 807,389 810,392 810,417 807,420 786,420 783,417 783,392" fill="#c4c4d6"/>
<polygon points="810,392 814,388 814,416 810,420" fill="#4a4a50"/>
<circle cx="796.5" cy="404.5" r="10" fill="#c4c4d6"/><circle cx="796.5" cy="404.5" r="6.5" fill="#d4d4e4"/>
<g fill="none" stroke-width="0.8"><circle cx="787" cy="393" r="1.5"/><circle cx="806" cy="393" r="1.5"/><circle cx="787" cy="416" r="1.5"/><circle cx="806" cy="416" r="1.5"/></g>
<polygon points="783,420 817,420 817,427 783,427" fill="#b8a0a0"/><polygon points="817,420 822,415 822,422 817,427" fill="#6a5a5a"/>
<!-- spool left flange -->
<ellipse cx="790.5" cy="296" rx="6" ry="45" fill="#5a5a46" stroke="#000"/>
<ellipse cx="790.5" cy="296" rx="4.5" ry="43" fill="none" stroke="#c8c890" stroke-width="0.6" stroke-opacity="0.7"/>
<!-- tall post -->
<rect x="756" y="278" width="26" height="150" fill="#b9b9cd"/>
<circle cx="767" cy="297" r="10" fill="#b9b9cd" stroke-width="0.9"/>
<rect x="775" y="290" width="10" height="14" rx="2" fill="#e0e0ea"/>
<polygon points="754,428 784,428 784,437 754,437" fill="#c4c4d6"/>
<!-- spool drums -->
<rect x="788" y="272" width="31" height="51" fill="url(#spool)"/>
<ellipse cx="825" cy="297" rx="6" ry="44" fill="#5a5a46"/><ellipse cx="825" cy="297" rx="4.5" ry="42" fill="none" stroke="#c8c890" stroke-width="0.6" stroke-opacity="0.7"/>
<!-- green motor -->
<rect x="806" y="326" width="9" height="38" fill="#b9b9cd"/>
<rect x="801" y="343" width="8" height="9" rx="2" fill="#e8e8f0"/>
<rect x="814" y="331" width="44" height="32" fill="#2f8a34"/>
<rect x="840" y="338" width="12" height="16" fill="#3aa040" stroke-width="0.7"/>
<rect x="816" y="354" width="40" height="8" fill="#267a2a" stroke-width="0.6"/>
<rect x="823" y="273" width="30" height="52" fill="url(#spool)"/>
<ellipse cx="859.5" cy="298" rx="5.5" ry="45" fill="#5a5a46"/><ellipse cx="860.5" cy="300" rx="3.5" ry="38" fill="#47474d" stroke="none"/>
<!-- right vertical block -->

<rect x="866" y="260" width="21" height="34" fill="#a4a4ac"/>
<path d="M870 262 V292 M875 262 V292 M880 262 V292" stroke="#666" stroke-width="0.8"/>
<rect x="874" y="244" width="6" height="16" fill="#9a9aa2"/>
<rect x="870" y="225" width="13" height="19" rx="3" fill="#a8a8b0"/>
<rect x="872" y="227" width="9" height="6" fill="#d0d0d8" stroke-width="0.6"/>
<rect x="860" y="290" width="12" height="16" rx="2" fill="#e0e0ea"/>
<circle cx="878" cy="302" r="2.5" fill="#000"/>
<rect x="884" y="305" width="4" height="25" fill="#d8d8b8" stroke-width="0.6"/>
<!-- green fittings -->
<g fill="#2a9a3a" stroke-width="0.6"><rect x="887" y="264" width="8" height="11"/><rect x="887" y="289" width="8" height="11"/><rect x="895" y="267" width="4" height="3" fill="#e8e8b0"/><rect x="895" y="292" width="4" height="3" fill="#e8e8b0"/><rect x="878" y="368" width="10" height="12"/><rect x="888" y="370" width="9" height="10"/><rect x="892" y="358" width="8" height="9"/></g>
<polygon points="866,361 885,361 890,357 890,370 885,375 866,375" fill="#c4c4d6"/><rect x="869" y="374" width="12" height="10" fill="#a8b0a0" stroke-width="0.6"/>
<!-- ============ MIDDLE MECHANISM ============ -->
<!-- lower module -->
<rect x="935" y="385" width="178" height="25" fill="#c4c4d6"/>
<rect x="940" y="372" width="170" height="14" fill="#b0b0c2"/>
<circle cx="937" cy="378" r="8" fill="#c4c4d6"/>
<rect x="926" y="371" width="20" height="40" fill="#c4c4d6"/>
<rect x="918" y="395" width="9" height="23" fill="#c8c8d8" stroke-width="0.7"/>
<g stroke-width="0.9">
 <polygon points="975,372 985,372 978,382 968,382" fill="#5a5a64"/>
 <polygon points="1060,372 1070,372 1063,382 1053,382" fill="#5a5a64"/>
 <rect x="1006" y="372" width="12" height="8" fill="#c8c8d8"/>
 <rect x="1065" y="374" width="22" height="9" fill="#c8c8d8"/><circle cx="1071" cy="378.5" r="2" fill="#000" stroke="none"/><circle cx="1079" cy="378.5" r="2" fill="#000" stroke="none"/>
 <rect x="1089" y="373" width="10" height="17" fill="#c8c8d8"/><circle cx="1094" cy="383" r="2.2" fill="#000" stroke="none"/>
 <line x1="960" y1="386" x2="1110" y2="386"/><line x1="968" y1="395" x2="1110" y2="395"/>
 <polygon points="1050,410 1065,410 1058,420 1048,418" fill="#e6e6e6"/>
 <line x1="1052" y1="425" x2="1062" y2="405"/>
 <polygon points="1029,334 1029,329 1033,326 1049,326 1053,329 1053,334" fill="#c4c4d6"/>
</g>
<!-- gearbox lower -->
<polygon points="1014,384 1043,384 1047,388 1047,414 1043,418 1014,418 1010,414 1010,388" fill="#c4c4d6"/>
<polygon points="1047,384 1052,380 1052,414 1047,418" fill="#66666f"/>
<circle cx="1023" cy="399" r="10" fill="#c4c4d6"/><g fill="none" stroke-width="0.8"><circle cx="1015" cy="389" r="1.5"/><circle cx="1042" cy="389" r="1.5"/><circle cx="1015" cy="413" r="1.5"/><circle cx="1042" cy="413" r="1.5"/></g><circle cx="1023" cy="399" r="6" fill="#d4d4e4"/>
<!-- white blocks -->
<rect x="1000" y="417" width="45" height="13" fill="#e6e6e6"/><polygon points="1045,417 1051,411 1051,424 1045,430" fill="#5a5a64"/>
<rect x="998" y="411" width="51" height="7" fill="#b8a0a0"/>
<rect x="966" y="410" width="25" height="13" fill="#e6e6e6"/><polygon points="991,410 1002,400 1002,413 991,423" fill="#5a5a64"/>
<rect x="974" y="402" width="10" height="8" fill="#c4c4d6"/>
<rect x="1083" y="414" width="23" height="13" fill="#e6e6e6"/><polygon points="1106,414 1112,408 1112,421 1106,427" fill="#5a5a64"/>
<rect x="1088" y="406" width="12" height="8" fill="#c4c4d6"/>
<!-- brown posts -->
<rect x="946" y="370" width="12" height="55" fill="#b8a0a0"/><rect x="950" y="370" width="4" height="55" fill="#8a7070" stroke="none"/>
<!-- green-gray plate -->
<rect x="911" y="327" width="11" height="43" fill="#8a9384"/>
<polygon points="911,332 917,327 922,327 922,332" fill="#a8b0a0"/>
<rect x="922" y="362" width="192" height="9" fill="#8a9384"/>
<!-- small cylinder left -->
<rect x="898" y="340" width="13" height="9" fill="#e8e8e8" stroke-width="0.7"/><rect x="897" y="341" width="2" height="7" fill="#a01010" stroke="none"/>
<rect x="922" y="337" width="8" height="10" fill="#d8d8d8" stroke-width="0.7"/><rect x="930" y="340" width="18" height="6" fill="#e8e8e8" stroke-width="0.7"/><rect x="935" y="339" width="3" height="8" fill="#a01010" stroke="none"/>
<!-- slide module -->
<rect x="930" y="349" width="84" height="14" fill="#c4c4d6"/>
<line x1="932" y1="354" x2="1012" y2="354" stroke-width="0.6"/><line x1="932" y1="358" x2="1012" y2="358" stroke-width="0.6"/>
<polygon points="966,333 972,326 1114,327 1114,333" fill="#9c9cac"/>
<rect x="966" y="333" width="148" height="29" fill="#c4c4d6"/>
<line x1="968" y1="340" x2="1114" y2="340" stroke-width="0.6"/><line x1="968" y1="347" x2="1114" y2="347" stroke-width="0.6"/><line x1="1010" y1="355" x2="1114" y2="355" stroke-width="0.6"/>
<polygon points="1028,332 1050,332 1053,335 1053,359 1050,362 1028,362 1025,359 1025,335" fill="#c4c4d6"/>
<circle cx="1038" cy="348" r="9" fill="#c4c4d6"/><g fill="none" stroke-width="0.8"><circle cx="1029" cy="337" r="1.5"/><circle cx="1049" cy="337" r="1.5"/><circle cx="1029" cy="358" r="1.5"/><circle cx="1049" cy="358" r="1.5"/></g><circle cx="1038" cy="348" r="6" fill="#d4d4e4"/>
<rect x="1057" y="349" width="10" height="7" fill="#b8a0a0" stroke-width="0.6"/>
<!-- small parts on plate -->
<rect x="914" y="397" width="11" height="13" fill="#c8c8d8" stroke-width="0.7"/>
<rect x="1125" y="395" width="22" height="9" fill="#c8c8d8" stroke-width="0.7"/>
<!-- ============ RIGHT SLIDE ============ -->
<rect x="1139" y="374" width="13" height="58" fill="#b8a0a0"/><rect x="1143" y="374" width="4" height="58" fill="#8a7070" stroke="none"/>
<polygon points="1177,378 1241,379 1232,406 1167,405" fill="#8a9384"/>
<rect x="1166" y="405" width="66" height="5" fill="#8a9384"/>
<g stroke-width="0.8" fill="none"><circle cx="1208" cy="398" r="2.8"/><path d="M1180 405 Q1181 400 1187 400 Q1193 400 1194 405"/><path d="M1212 405 Q1213 400 1219 400 Q1225 400 1226 405"/></g>
<circle cx="1183" cy="380" r="1.3" fill="#000" stroke="none"/><circle cx="1234" cy="381" r="1.3" fill="#000" stroke="none"/>
<rect x="1152" y="358" width="92" height="19" fill="#c4c4d6"/>
<rect x="1175" y="363" width="30" height="8" rx="4" fill="#1a2240"/><rect x="1210" y="363" width="32" height="8" rx="4" fill="#1a2240"/><rect x="1187" y="363" width="2" height="5" fill="#d01010" stroke="none"/><rect x="1222" y="365" width="2" height="5" fill="#a01010" stroke="none"/>
<rect x="1170" y="333" width="44" height="25" fill="#111"/>
<rect x="1173" y="337" width="37" height="4" fill="#b0b0b0" stroke="none"/><rect x="1172" y="345" width="38" height="5" fill="#b0b0b0" stroke="none"/><rect x="1173" y="354" width="37" height="3" fill="#b0b0b0" stroke="none"/>
<rect x="1139" y="335" width="31" height="39" fill="#8a9384"/>
<polygon points="1168,335 1172,330 1176,330 1174,335" fill="#8a9384"/>
<g fill="#000" stroke="none"><circle cx="1152" cy="340" r="2.2"/><circle cx="1166" cy="345" r="2.2"/><circle cx="1152" cy="364" r="2.2"/><circle cx="1166" cy="364" r="2.2"/><circle cx="1154" cy="371" r="2"/></g>
<path d="M1215 356 H1256" stroke="#c01010" stroke-width="2" stroke-dasharray="5 2"/>
<!-- ============ POLE + MONITOR ============ -->
<rect x="1104" y="427" width="44" height="10" fill="#c4c4d6"/>
<rect x="1114" y="308" width="25" height="122" fill="url(#pole)"/>
<polygon points="1023,173 1027,167 1237,171 1232,177" fill="#9c9cac"/>
<polygon points="1232,177 1237,171 1237,303 1232,310" fill="#4a4a50"/>
<polygon points="1023,173 1232,177 1232,310 1023,307" fill="#b9b9cd"/>
<g fill="#000" stroke="none"><circle cx="1026" cy="176" r="1.5"/><circle cx="1127" cy="178" r="1.5"/><circle cx="1229" cy="180" r="1.5"/><circle cx="1026" cy="240" r="1.5"/><circle cx="1229" cy="244" r="1.5"/><circle cx="1026" cy="304" r="1.5"/><circle cx="1127" cy="306" r="1.5"/><circle cx="1229" cy="308" r="1.5"/></g>
</g>
</svg>
<svg width="1920" height="1048" style="top:0;left:0" stroke-linejoin="round">
<g stroke="#000" stroke-width="1.3">
<!-- back feet -->
<g fill="url(#pad)"><rect x="1477" y="770" width="6" height="8" fill="#ddd"/><path d="M1465 790 Q1466 780 1480 778 Q1494 780 1495 790Z"/><ellipse cx="1480" cy="790" rx="15" ry="3.5" fill="#2a8a3a"/></g>
<!-- right side frame (dark) -->
<polygon points="1461,548 1490,517 1490,760 1461,790" fill="#47474d"/>
<polygon points="1466,560 1488,538 1488,740 1466,762" fill="#b9b9cd"/>
<polygon points="1466,744 1488,722 1488,740 1466,762" fill="#9c9cac"/>
<!-- box side -->
<polygon points="1461,375 1492,342 1490,517 1461,548" fill="#4a4a50"/>
<!-- box top -->
<polygon points="1242,371 1270,337 1492,342 1461,375" fill="#9c9cac"/>
<polygon points="1329,360 1339,350 1418,352 1403.5,362" fill="#cfcfcf" stroke-width="1.1"/>
<path d="M1403 362 L1407 350 Q1410 344 1413 348 L1417 352 Z" fill="#9a9a9a" stroke-width="0.9"/>
<rect x="1308" y="334" width="8" height="4" fill="#c8c8d8" stroke-width="0.6"/><rect x="1444" y="336" width="8" height="4" fill="#c8c8d8" stroke-width="0.6"/>
<!-- box front -->
<polygon points="1242,371 1461,375 1461,548 1242,545" fill="#b9b9cd"/>
<rect x="1274" y="370" width="22" height="11" fill="#c4c4d6" stroke-width="0.8"/><rect x="1410" y="372" width="22" height="11" fill="#c4c4d6" stroke-width="0.8"/>
<g fill="#000" stroke="none"><circle cx="1277" cy="376" r="1.3"/><circle cx="1294" cy="376" r="1.3"/><circle cx="1413" cy="379" r="1.3"/><circle cx="1429" cy="379" r="1.3"/><circle cx="1282" cy="537" r="1.4"/><circle cx="1420" cy="539" r="1.4"/></g>
<!-- stand front frame -->
<path d="M1242,546 L1461,549 L1461,790 L1242,787 Z M1263,567 L1263,767 L1441,771 L1441,570 Z" fill="#b9b9cd" fill-rule="evenodd"/>
<!-- inner back leg and rail -->
<rect x="1270" y="567" width="21" height="171" fill="#b9b9cd"/>
<polygon points="1291,737 1441,740 1441,760 1291,758" fill="#b9b9cd"/>
<polygon points="1263,767 1291,738 1291,758 1270,780 1263,780" fill="#9c9cac"/>
<polygon points="1263,767 1441,771 1441,775 1263,772" fill="#9c9cac" stroke-width="0.6"/>
<!-- front feet -->
<g>
 <rect x="1251" y="790" width="6" height="10" fill="#eee"/><rect x="1248" y="797" width="12" height="6" fill="#ddd"/>
 <path d="M1239 817 Q1240 806 1254 803 Q1268 806 1269 817Z" fill="url(#pad)"/><ellipse cx="1254" cy="818" rx="15" ry="3" fill="#2a8a3a"/>
 <rect x="1449" y="793" width="6" height="10" fill="#eee"/><rect x="1446" y="800" width="12" height="6" fill="#ddd"/>
 <path d="M1437 820 Q1438 809 1452 806 Q1466 809 1467 820Z" fill="url(#pad)"/><ellipse cx="1452" cy="821" rx="15" ry="3" fill="#2a8a3a"/>
</g>
</g>
<!-- watermark -->
<g fill="#f08228" stroke="none">
 <path d="M890.5 540 V519 L893.5 516 V537 L906 538 V540Z"/>
 <path d="M895 537 V512 L898 509 V534 L906 536 V537Z"/>
 <path d="M899.5 534 V510 L902 507 V531 L906 533Z"/>
 <path d="M936.5 540 V519 L933.5 516 V537 L921 538 V540Z"/>
 <path d="M932 537 V512 L929 509 V534 L921 536 V537Z"/>
 <path d="M927.5 534 V510 L925 507 V531 L921 533Z"/>
 <path d="M910 519 Q905 526 908 532 Q911 537 916 537 Q922 535 921 527 Q920 522 917 520 Q919 527 915 532 Q911 530 912 524 Q912 521 910 519Z" fill="#f4a018"/>
 <path d="M909 512 Q904 518 907 523" stroke="#f4a018" stroke-width="2" fill="none"/>
 <rect x="906" y="537" width="15" height="3" fill="#e86a20"/>
</g>
<text x="947" y="530.5" font-size="17" font-weight="bold" fill="#f28a30" font-family="Liberation Sans" textLength="82" lengthAdjust="spacingAndGlyphs">智造资料网</text>
<text x="947" y="538.5" font-size="5.5" font-weight="bold" fill="#f28a30" font-family="Liberation Sans" textLength="82" lengthAdjust="spacingAndGlyphs">INTELLIGENT MANUFACTURING DATA</text>
<!-- axis triad -->
<g>
 <rect x="94.5" y="916.5" width="22" height="23" fill="#5e6e8c" stroke="#c8c8c8" stroke-width="1"/>
 <path d="M116.5 916.5 L120 912.5" stroke="#c8c8c8" stroke-width="1"/>
 <rect x="118.5" y="875" width="2.2" height="67" fill="#20c8d8"/>
 <path d="M116 880 L119.6 867 L123.2 880Z" fill="#20d8e8"/>
 <rect x="93" y="940" width="26" height="2.5" fill="#e81818"/>
 <path d="M93 936 L85 941 L93 945Z" fill="#e81818"/>
 <path d="M92 943.5 H118 M92 943.5 L95 940" stroke="#e8e020" stroke-width="1" fill="none"/>
 <circle cx="120" cy="941" r="3" fill="#666"/>
 <path d="M120 942 L114 948" stroke="#20a020" stroke-width="3"/>
 <circle cx="114" cy="948" r="3.2" fill="#20a020"/>
 <text x="118" y="865" font-size="11" fill="#d0d0d0" text-anchor="middle" font-family="Liberation Sans">Z</text>
 <path d="M74 937 L82 945 M82 937 L74 945" stroke="#e82020" stroke-width="1.1"/>
 <path d="M108 946 L112 952 L116 946 M112 952 V957" stroke="#d0d0d0" stroke-width="0.8" fill="none"/>
</g>
</svg>
<div class="a" style="left:0;top:1020px;width:1918px;height:1px;background:#a0a0a0"></div>
<div class="a" style="left:0;top:1021px;width:1918px;height:1px;background:#f4f6fa"></div>
<div class="a" style="left:0;top:1040px;width:1920px;height:8px;background:#1f1f1f"></div>
<div class="a" style="left:48px;top:1040px;width:344px;height:8px;background:#f0f0f0;border-top:1px solid #c0c0c0"></div>
<div class="a" style="left:638px;top:1040px;width:48px;height:8px;background:#4d4d4d"></div>
<div class="a" style="left:1915px;top:1040px;width:1px;height:8px;background:#555"></div>
<svg width="1920" height="1048" style="top:0;left:0">
 <!-- row1 -->
 <rect x="1336" y="1004" width="3" height="15" fill="none" stroke="#b8bcc8" stroke-dasharray="1 1"/>
 <rect x="1340" y="1004" width="130" height="15" fill="#fff"/>
 <text x="1485" y="1016" font-size="12" fill="#000" font-family="Liberation Sans">绝对 XY 上视图</text>
 <rect x="1592" y="1003" width="1" height="15" fill="#a0a0a0"/>
 <text x="1601" y="1016" font-size="12" fill="#000" font-family="Liberation Sans">绝对视图</text>
 <rect x="1658" y="1003" width="3" height="15" fill="none" stroke="#b8bcc8" stroke-dasharray="1 1"/>
 <text x="1668" y="1016" font-size="12" font-weight="bold" fill="#000" font-family="Liberation Sans">LAYER0</text>
 <rect x="1726" y="1003" width="1" height="15" fill="#a0a0a0"/><rect x="1757" y="1003" width="1" height="15" fill="#a0a0a0"/><rect x="1800" y="1003" width="1" height="15" fill="#a0a0a0"/><rect x="1843" y="1003" width="1" height="15" fill="#a0a0a0"/><rect x="1886" y="1003" width="1" height="15" fill="#a0a0a0"/>
 <rect x="1762" y="1005" width="32" height="12" fill="#466290"/><rect x="1805" y="1005" width="32" height="12" fill="#466290"/><rect x="1848" y="1005" width="32" height="12" fill="#466290"/>
 <circle cx="1900.5" cy="1009.5" r="6" fill="#1a3ad0"/><path d="M1896 1006 Q1899 1004 1902 1007 L1900 1011 Q1897 1011 1896 1006Z M1902 1011 Q1906 1010 1905 1014 L1902 1015Z" fill="#20b020"/>
 <!-- row2 -->
 <rect x="1132" y="1024" width="1" height="15" fill="#a0a0a0"/>
 <text x="1141" y="1036" font-size="12" fill="#000" font-family="Liberation Sans">拴牢</text>
 <g fill="#a0a0a0"><rect x="1175" y="1024" width="1" height="15"/><rect x="1206" y="1024" width="1" height="15"/><rect x="1237" y="1024" width="1" height="15"/><rect x="1268" y="1024" width="1" height="15"/><rect x="1299" y="1024" width="1" height="15"/><rect x="1330" y="1024" width="1" height="15"/><rect x="1581" y="1024" width="1" height="15"/><rect x="1654" y="1024" width="1" height="15"/></g>
 <rect x="1182" y="1022" width="16" height="16" fill="#c8c8d8" stroke="#666"/><path d="M1186 1030 Q1186 1025 1191 1025 L1194 1027 M1194 1030 Q1194 1035 1189 1035 L1186 1033" stroke="#e05050" stroke-width="1.5" fill="none"/>
 <rect x="1212" y="1022" width="18" height="17" fill="#fde58a"/><path d="M1216 1024 L1226 1034 L1222 1034 L1224 1038" stroke="#777" fill="#e8e8f0"/><circle cx="1217" cy="1026" r="3" fill="#c040c0"/>
 <path d="M1246 1030 L1254 1025 L1261 1028 L1253 1033Z" fill="#e8a860"/><rect x="1246" y="1031" width="9" height="8" fill="#5080d0"/>
 <text x="1284" y="1037" font-size="15" font-weight="bold" fill="#4a78c8" text-anchor="middle" font-family="Liberation Sans">?</text>
 <path d="M1308 1026 L1313 1023 L1318 1026 V1031 L1313 1034 L1308 1031Z" fill="#5a90e0"/><path d="M1315 1031 L1320 1028 L1325 1031 V1036 L1320 1039 L1315 1036Z" fill="#6a7a8a"/><path d="M1305 1033 H1313" stroke="#e02020" stroke-width="2"/>
 <rect x="1336" y="1022" width="18" height="17" fill="#fde58a"/><path d="M1338 1026 L1345 1023 L1352 1026 V1035 L1345 1038 L1338 1035Z" fill="#8aa0a8" stroke="#335"/><path d="M1338 1026 L1345 1029 L1352 1026 L1345 1023Z" fill="#d040e0"/>
 <rect x="1361" y="1024" width="1" height="15" fill="#a0a0a0"/><rect x="1392" y="1024" width="1" height="15" fill="#a0a0a0"/><rect x="1423" y="1024" width="1" height="15" fill="#a0a0a0"/>
 <text x="1463" y="1036" font-size="12" fill="#000" font-family="Liberation Sans">LS: 1.00 PS: 1.00</text>
 <text x="1589" y="1036" font-size="12" fill="#000" font-family="Liberation Sans">单位: 毫米</text>
 <text x="1663" y="1036" font-size="12" fill="#000" font-family="Liberation Sans" textLength="238" lengthAdjust="spacing">X = 1649.827 <tspan fill="#e81010">Y =-8668.471</tspan> Z = 0000.000</text>
 <!-- peeking icons -->
 <rect x="1371" y="1026" width="8" height="12" fill="none" stroke="#777" stroke-width="1.2"/>
 <circle cx="1407" cy="1031" r="7" fill="none" stroke="#20a020" stroke-width="1.8"/>
 <rect x="1431" y="1027" width="15" height="11" fill="none" stroke="#888" stroke-width="1.2"/><path d="M1438.5 1027 V1038" stroke="#888"/>
 <!-- IME bar -->
 <rect x="1368.5" y="1009.5" width="197" height="22" fill="#fff" stroke="#d0d0d0"/>
 <path d="M1362 1012 Q1361 1005 1370 1004 L1383 1002 Q1390 1002 1390 1010 L1391 1022 Q1391 1029 1384 1030 L1370 1032 Q1363 1032 1363 1025Z" fill="#ee5a24"/>
 <path d="M1383 1010 Q1376 1006 1370 1011 Q1368 1016 1376 1017 Q1384 1018 1382 1023 Q1377 1028 1369 1024" stroke="#fff" stroke-width="3" fill="none"/>
 <text x="1400" y="1027" font-size="15" fill="#2a7ad8" text-anchor="middle" font-family="Liberation Sans" font-weight="bold">中</text>
 <text x="1422" y="1026" font-size="15" font-weight="bold" fill="#2a7ad8" text-anchor="middle" font-family="Liberation Sans">°,</text>
 <circle cx="1443.5" cy="1021" r="6.5" fill="none" stroke="#2a7ad8" stroke-width="1.6"/><circle cx="1441" cy="1019.5" r="0.9" fill="#2a7ad8"/><circle cx="1446" cy="1019.5" r="0.9" fill="#2a7ad8"/><path d="M1440 1023 Q1443.5 1026 1447 1023" stroke="#2a7ad8" fill="none"/>
 <rect x="1463" y="1013" width="5" height="10" rx="2.5" fill="#2a7ad8"/><path d="M1461 1020 Q1465.5 1027 1470 1020 M1465.5 1025 V1029" stroke="#2a7ad8" stroke-width="1.4" fill="none"/>
 <rect x="1480" y="1015" width="16" height="12" rx="2" fill="none" stroke="#2a7ad8" stroke-width="1.6"/><path d="M1483 1019 H1493 M1483 1023 H1493" stroke="#2a7ad8" stroke-dasharray="1.5 1"/>
 <circle cx="1509" cy="1017" r="3.5" fill="#c8ccd8"/><path d="M1503 1029 Q1503 1021 1509 1021 Q1515 1021 1515 1029Z" fill="#c8ccd8"/>
 <path d="M1526 1016 L1530 1013 H1535 L1539 1016 L1537 1019 L1535 1018 V1028 H1530 V1018 L1528 1019Z" fill="#2a7ad8"/>
 <rect x="1548" y="1014" width="6" height="6" fill="#2a7ad8"/><rect x="1556" y="1014" width="6" height="6" fill="none" stroke="#2a7ad8" stroke-width="1.2"/><rect x="1548" y="1022" width="6" height="6" fill="#2a7ad8"/><rect x="1556" y="1022" width="6" height="6" fill="#2a7ad8"/>
 <text x="1829" y="1054" font-size="12" fill="#fff" text-anchor="middle" font-family="Liberation Sans">16:46</text>
</svg>
</body></html>
